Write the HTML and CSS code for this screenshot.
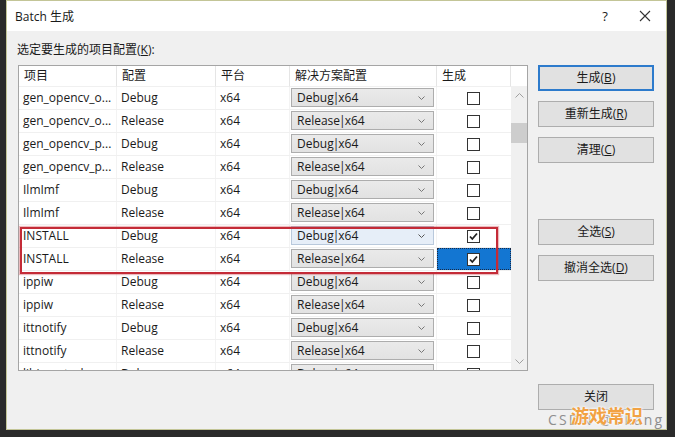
FILE: index.html
```html
<!DOCTYPE html>
<html lang="zh-CN">
<head>
<meta charset="utf-8">
<title>Batch 生成</title>
<link rel="stylesheet" href="styles.css">
</head>
<body>
<div class="screen">
  <div class="window">
    <div class="titlebar">
      <span class="title">Batch 生成</span>
      <span class="help">?</span>
      <span class="close"><svg width="12" height="12" viewBox="0 0 12 12"><path d="M1 1L11 11M11 1L1 11" stroke="#333" stroke-width="1.1" fill="none"/></svg></span>
    </div>
    <div class="content">
      <div class="left">
        <div class="label">选定要生成的项目配置(<u>K</u>):</div>
        <div class="table">
          <div class="head">
            <div class="hc c1">项目</div>
            <div class="hc c2">配置</div>
            <div class="hc c3">平台</div>
            <div class="hc c4">解决方案配置</div>
            <div class="hc c5">生成</div>
            <div class="hc c6"></div>
          </div>
          <div class="tbody">
            <div class="rows">
              <div class="row"><div class="cell c1">gen_opencv_o...</div><div class="cell c2">Debug</div><div class="cell c3">x64</div><div class="cell c4"><div class="dd"><span>Debug<span class="pipe">|</span>x64</span><svg class="chev" width="7" height="4" viewBox="0 0 7 4"><path d="M0.5 0.5L3.5 3.5L6.5 0.5" stroke="#777" fill="none"/></svg></div></div><div class="cell c5"><span class="cb"></span></div></div>
              <div class="row"><div class="cell c1">gen_opencv_o...</div><div class="cell c2">Release</div><div class="cell c3">x64</div><div class="cell c4"><div class="dd"><span>Release<span class="pipe">|</span>x64</span><svg class="chev" width="7" height="4" viewBox="0 0 7 4"><path d="M0.5 0.5L3.5 3.5L6.5 0.5" stroke="#777" fill="none"/></svg></div></div><div class="cell c5"><span class="cb"></span></div></div>
              <div class="row"><div class="cell c1">gen_opencv_p...</div><div class="cell c2">Debug</div><div class="cell c3">x64</div><div class="cell c4"><div class="dd"><span>Debug<span class="pipe">|</span>x64</span><svg class="chev" width="7" height="4" viewBox="0 0 7 4"><path d="M0.5 0.5L3.5 3.5L6.5 0.5" stroke="#777" fill="none"/></svg></div></div><div class="cell c5"><span class="cb"></span></div></div>
              <div class="row"><div class="cell c1">gen_opencv_p...</div><div class="cell c2">Release</div><div class="cell c3">x64</div><div class="cell c4"><div class="dd"><span>Release<span class="pipe">|</span>x64</span><svg class="chev" width="7" height="4" viewBox="0 0 7 4"><path d="M0.5 0.5L3.5 3.5L6.5 0.5" stroke="#777" fill="none"/></svg></div></div><div class="cell c5"><span class="cb"></span></div></div>
              <div class="row"><div class="cell c1">IlmImf</div><div class="cell c2">Debug</div><div class="cell c3">x64</div><div class="cell c4"><div class="dd"><span>Debug<span class="pipe">|</span>x64</span><svg class="chev" width="7" height="4" viewBox="0 0 7 4"><path d="M0.5 0.5L3.5 3.5L6.5 0.5" stroke="#777" fill="none"/></svg></div></div><div class="cell c5"><span class="cb"></span></div></div>
              <div class="row"><div class="cell c1">IlmImf</div><div class="cell c2">Release</div><div class="cell c3">x64</div><div class="cell c4"><div class="dd"><span>Release<span class="pipe">|</span>x64</span><svg class="chev" width="7" height="4" viewBox="0 0 7 4"><path d="M0.5 0.5L3.5 3.5L6.5 0.5" stroke="#777" fill="none"/></svg></div></div><div class="cell c5"><span class="cb"></span></div></div>
              <div class="row"><div class="cell c1">INSTALL</div><div class="cell c2">Debug</div><div class="cell c3">x64</div><div class="cell c4"><div class="dd hover"><span>Debug<span class="pipe">|</span>x64</span><svg class="chev" width="7" height="4" viewBox="0 0 7 4"><path d="M0.5 0.5L3.5 3.5L6.5 0.5" stroke="#555" fill="none"/></svg></div></div><div class="cell c5"><span class="cb checked"><svg width="11" height="11" viewBox="0 0 11 11"><path d="M2 5.5L4.3 8L9 2.5" stroke="#222" stroke-width="1.8" fill="none"/></svg></span></div></div>
              <div class="row"><div class="cell c1">INSTALL</div><div class="cell c2">Release</div><div class="cell c3">x64</div><div class="cell c4"><div class="dd"><span>Release<span class="pipe">|</span>x64</span><svg class="chev" width="7" height="4" viewBox="0 0 7 4"><path d="M0.5 0.5L3.5 3.5L6.5 0.5" stroke="#777" fill="none"/></svg></div></div><div class="cell c5 selected"><span class="cb checked"><svg width="11" height="11" viewBox="0 0 11 11"><path d="M2 5.5L4.3 8L9 2.5" stroke="#222" stroke-width="1.8" fill="none"/></svg></span></div></div>
              <div class="row"><div class="cell c1">ippiw</div><div class="cell c2">Debug</div><div class="cell c3">x64</div><div class="cell c4"><div class="dd"><span>Debug<span class="pipe">|</span>x64</span><svg class="chev" width="7" height="4" viewBox="0 0 7 4"><path d="M0.5 0.5L3.5 3.5L6.5 0.5" stroke="#777" fill="none"/></svg></div></div><div class="cell c5"><span class="cb"></span></div></div>
              <div class="row"><div class="cell c1">ippiw</div><div class="cell c2">Release</div><div class="cell c3">x64</div><div class="cell c4"><div class="dd"><span>Release<span class="pipe">|</span>x64</span><svg class="chev" width="7" height="4" viewBox="0 0 7 4"><path d="M0.5 0.5L3.5 3.5L6.5 0.5" stroke="#777" fill="none"/></svg></div></div><div class="cell c5"><span class="cb"></span></div></div>
              <div class="row"><div class="cell c1">ittnotify</div><div class="cell c2">Debug</div><div class="cell c3">x64</div><div class="cell c4"><div class="dd"><span>Debug<span class="pipe">|</span>x64</span><svg class="chev" width="7" height="4" viewBox="0 0 7 4"><path d="M0.5 0.5L3.5 3.5L6.5 0.5" stroke="#777" fill="none"/></svg></div></div><div class="cell c5"><span class="cb"></span></div></div>
              <div class="row"><div class="cell c1">ittnotify</div><div class="cell c2">Release</div><div class="cell c3">x64</div><div class="cell c4"><div class="dd"><span>Release<span class="pipe">|</span>x64</span><svg class="chev" width="7" height="4" viewBox="0 0 7 4"><path d="M0.5 0.5L3.5 3.5L6.5 0.5" stroke="#777" fill="none"/></svg></div></div><div class="cell c5"><span class="cb"></span></div></div>
              <div class="row"><div class="cell c1">libjpeg-turbo</div><div class="cell c2">Debug</div><div class="cell c3">x64</div><div class="cell c4"><div class="dd"><span>Debug<span class="pipe">|</span>x64</span><svg class="chev" width="7" height="4" viewBox="0 0 7 4"><path d="M0.5 0.5L3.5 3.5L6.5 0.5" stroke="#777" fill="none"/></svg></div></div><div class="cell c5"><span class="cb"></span></div></div>
            </div>
            <div class="scrollbar">
              <div class="sb-btn"><svg width="9" height="5" viewBox="0 0 9 5"><path d="M0.5 4.5L4.5 0.5L8.5 4.5" stroke="#a0a0a0" fill="none"/></svg></div>
              <div class="sb-track"><div class="sb-thumb"></div></div>
              <div class="sb-btn"><svg width="9" height="5" viewBox="0 0 9 5"><path d="M0.5 0.5L4.5 4.5L8.5 0.5" stroke="#a0a0a0" fill="none"/></svg></div>
            </div>
          </div>
          <div class="redbox"></div>
        </div>
      </div>
      <div class="buttons">
        <div class="btn default">生成(<u>B</u>)</div>
        <div class="btn">重新生成(<u>R</u>)</div>
        <div class="btn">清理(<u>C</u>)</div>
        <div class="btn sel-all">全选(<u>S</u>)</div>
        <div class="btn">撤消全选(<u>D</u>)</div>
        <div class="btn close-btn">关闭</div>
      </div>
    </div>
    <div class="watermark">
      <span class="wm-csdn">CSDN @Vkang</span>
      <span class="wm-logo">游戏常识</span>
    </div>
  </div>
</div>
</body>
</html>
```
FILE: styles.css
```css
* { box-sizing: border-box; }
html, body { margin: 0; padding: 0; }
body {
  background: #2a2a2a;
  font-family: "Open Sans", "Noto Sans CJK SC", sans-serif;
  font-size: 12px;
  color: #1a1a1a;
}
.screen {
  width: 675px;
  height: 437px;
  padding-left: 6px;
  background: #2a2a2a;
}
.window {
  position: relative;
  width: 661px;
  height: 430px;
  border: 1px solid #c3c597;
  background: #f0f0f0;
  display: flex;
  flex-direction: column;
}
.titlebar {
  height: 30px;
  background: #ffffff;
  display: flex;
  align-items: center;
  padding-left: 8px;
  flex-shrink: 0;
}
.title { flex: 1; font-size: 12px; }
.help { width: 14px; text-align: center; margin-right: 27px; font-size: 13px; }
.close { width: 12px; height: 12px; margin-right: 15px; display: flex; }
.content {
  display: flex;
  padding: 12px 0 0 10px;
}
.left { width: 521px; }
.label { height: 14px; line-height: 14px; margin-bottom: 8px; }
.table {
  position: relative;
  margin-left: 1px;
  width: 510px;
  height: 306px;
  border: 1px solid #a5a5a5;
  background: #ffffff;
}
.head {
  display: flex;
  height: 21px;
  background: #fff;
}
.hc {
  height: 21px;
  line-height: 20px;
  padding-left: 5px;
  border-right: 1px solid #e5e5e5;
  border-bottom: 1px solid #f0f0f0;
}
.c1 { width: 98px; }
.c2 { width: 99px; }
.c3 { width: 74px; }
.c4 { width: 147px; }
.c5 { width: 74px; }
.hc.c6 { width: 16px; border-right: none; padding: 0; }
.tbody {
  display: flex;
  height: 283px;
}
.rows {
  width: 492px;
  overflow: hidden;
}
.row {
  display: flex;
  height: 23px;
  border-bottom: 1px solid #f0f0f0;
}
.cell {
  height: 22px;
  line-height: 22px;
  padding-left: 4px;
  border-right: 1px solid #f3f3f3;
  white-space: nowrap;
  overflow: hidden;
}
.cell.c4 { padding: 1px 0 0 1px; }
.cell.c5 {
  padding: 0;
  display: flex;
  align-items: center;
  justify-content: center;
  border-right: none;
}
.dd {
  width: 143px;
  height: 19px;
  border: 1px solid #adadad;
  background: linear-gradient(#eaeaea, #e2e2e2);
  display: flex;
  align-items: center;
  justify-content: space-between;
  padding: 0 8px 0 5px;
  line-height: 17px;
}
.pipe { margin: 0 -1px; }
.dd.hover {
  background: #e6eef8;
  border-color: #b9c9dc;
}
.chev { display: block; }
.cb {
  width: 13px;
  height: 13px;
  border: 1px solid #333;
  background: #fff;
  display: flex;
  align-items: center;
  justify-content: center;
  margin-right: 1px;
}
.cell.c5.selected {
  background: #1376d2;
  outline: 1px dotted #1a2a44;
  outline-offset: -1px;
}
.scrollbar {
  width: 16px;
  background: #f0f0f0;
  display: flex;
  flex-direction: column;
}
.sb-btn {
  height: 17px;
  display: flex;
  align-items: center;
  justify-content: center;
}
.sb-track {
  flex: 1;
  padding-top: 19px;
}
.sb-thumb {
  height: 20px;
  background: #cdcdcd;
}
.redbox {
  position: absolute;
  left: 1px;
  top: 161px;
  width: 478px;
  height: 47px;
  border: 2px solid #c42b37;
  box-shadow: 0 0 1px 1px rgba(200, 60, 70, 0.35);
  pointer-events: none;
}
.buttons {
  width: 116px;
  padding-top: 22px;
  display: flex;
  flex-direction: column;
}
.btn {
  height: 26px;
  line-height: 24px;
  text-align: center;
  background: #e1e1e1;
  border: 1px solid #adadad;
  margin-bottom: 10px;
}
.btn.default {
  border: 2px solid #2d7bcc;
  line-height: 22px;
}
.btn.sel-all { margin-top: 46px; }
.btn.close-btn { margin-top: 93px; }
.watermark {
  position: absolute;
  left: 541px;
  top: 404px;
  width: 120px;
  height: 26px;
}
.wm-csdn {
  position: absolute;
  left: 0;
  top: 5px;
  font-size: 14px;
  color: #8e8e8e;
  letter-spacing: 2.1px;
}
.wm-logo {
  position: absolute;
  left: 23px;
  top: -3px;
  font-size: 18px;
  font-weight: bold;
  color: #f2a243;
  text-shadow: 0 0 3px #fff, 0 0 3px #fff;
}
```
